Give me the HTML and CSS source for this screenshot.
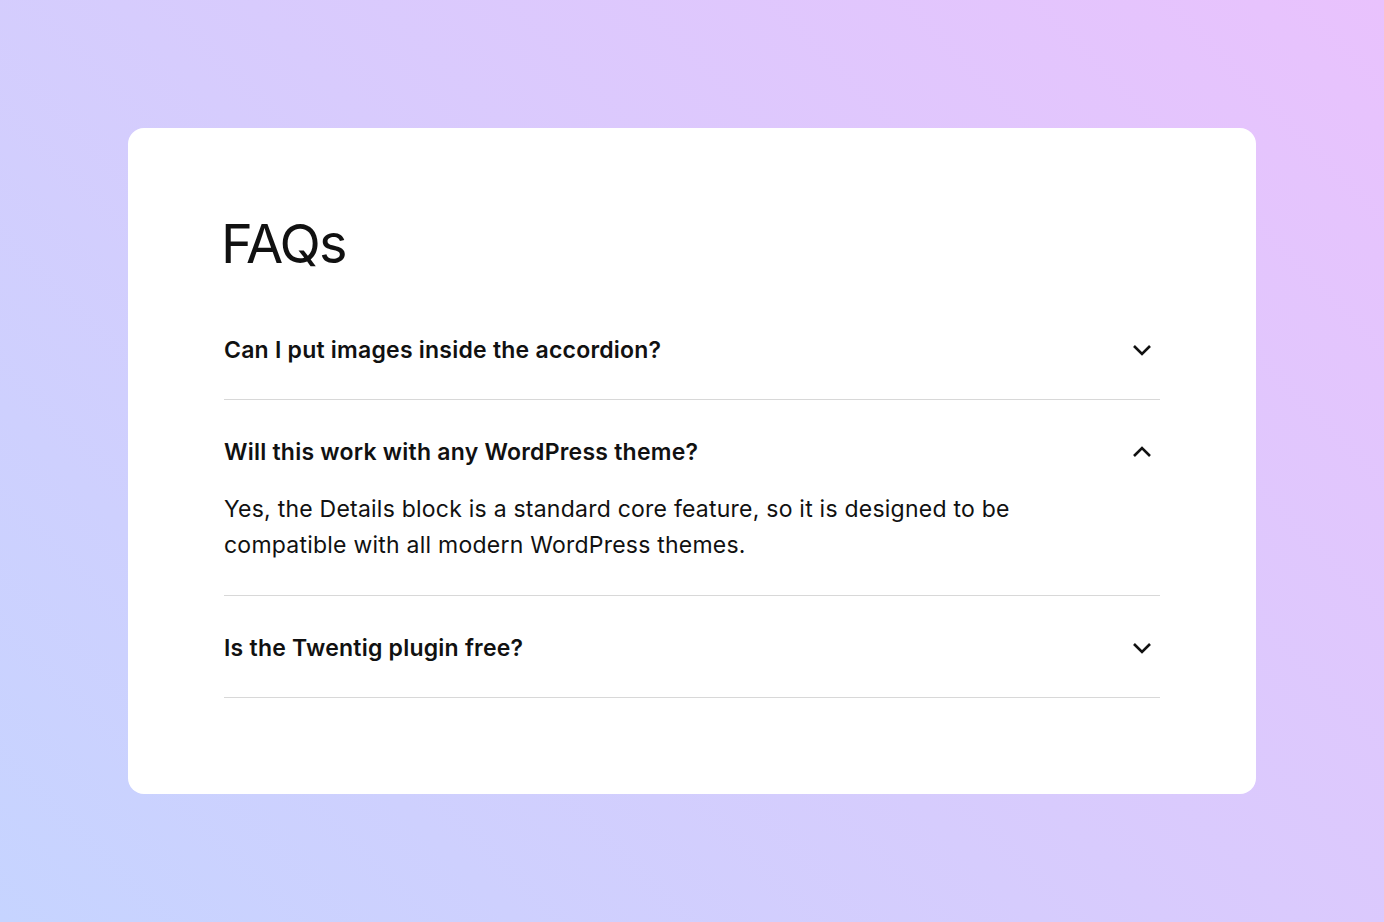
FILE: index.html
```html
<!DOCTYPE html>
<html lang="en">
<head>
  <meta charset="UTF-8" />
  <meta name="viewport" content="width=device-width, initial-scale=1.0" />
  <title>FAQs</title>
  <link rel="stylesheet" href="styles.css">
</head>
<body>
  <div class="card">
    <h1 class="title">FAQs</h1>

    <details class="faq">
      <summary>
        <span>Can I put images inside the accordion?</span>
        <svg class="chevron" viewBox="0 0 24 24" width="24" height="24"><path d="M4 8l8 8 8-8" /></svg>
      </summary>
      <p class="answer">Yes. You can add images, lists, buttons or any other block inside the Details block.</p>
    </details>

    <details class="faq" open>
      <summary>
        <span>Will this work with any WordPress theme?</span>
        <svg class="chevron" viewBox="0 0 24 24" width="24" height="24"><path d="M4 8l8 8 8-8" /></svg>
      </summary>
      <p class="answer">Yes, the Details block is a standard core feature, so it is designed to be compatible with all modern WordPress themes.</p>
    </details>

    <details class="faq">
      <summary>
        <span>Is the Twentig plugin free?</span>
        <svg class="chevron" viewBox="0 0 24 24" width="24" height="24"><path d="M4 8l8 8 8-8" /></svg>
      </summary>
      <p class="answer">Yes, Twentig is free to download and use.</p>
    </details>
  </div>
</body>
</html>
```

FILE: styles.css
```css
body {
  font-family: Inter, 'Noto Sans', sans-serif;
  background: linear-gradient(45deg, #c6d4ff 0%, #d6ccfd 45%, #e9c2fd 100%);
  color: #111;
  display: flex;
  justify-content: center;
  align-items: center;
  height: 100vh;
  margin: 0;
}

.card {
  background: #fff;
  width: 1128px;
  box-sizing: border-box;
  padding: 86px 96px 96px;
  border-radius: 16px;
}

.title {
  font-size: 54px;
  font-weight: 400;
  line-height: 59px;
  letter-spacing: -0.035em;
  margin: 0 0 25px -3px;
}

.faq {
  border-bottom: 1px solid #d8d8d8;
}

.faq summary {
  list-style: none;
  display: flex;
  justify-content: space-between;
  align-items: center;
  height: 38px;
  padding: 33px 0 30px;
  font-size: 23px;
  font-weight: 600;
  line-height: 38px;
  letter-spacing: 0.01em;
  cursor: pointer;
}

.faq summary::-webkit-details-marker {
  display: none;
}

.faq[open] summary {
  padding-bottom: 20px;
}

.chevron {
  fill: none;
  stroke: #111;
  stroke-width: 2.6;
  margin-right: 6px;
}

.faq[open] .chevron {
  transform: rotate(180deg);
}

.answer {
  margin: 0;
  padding-bottom: 32px;
  font-size: 23px;
  line-height: 36px;
  letter-spacing: 0.01em;
  max-width: 820px;
}
```
